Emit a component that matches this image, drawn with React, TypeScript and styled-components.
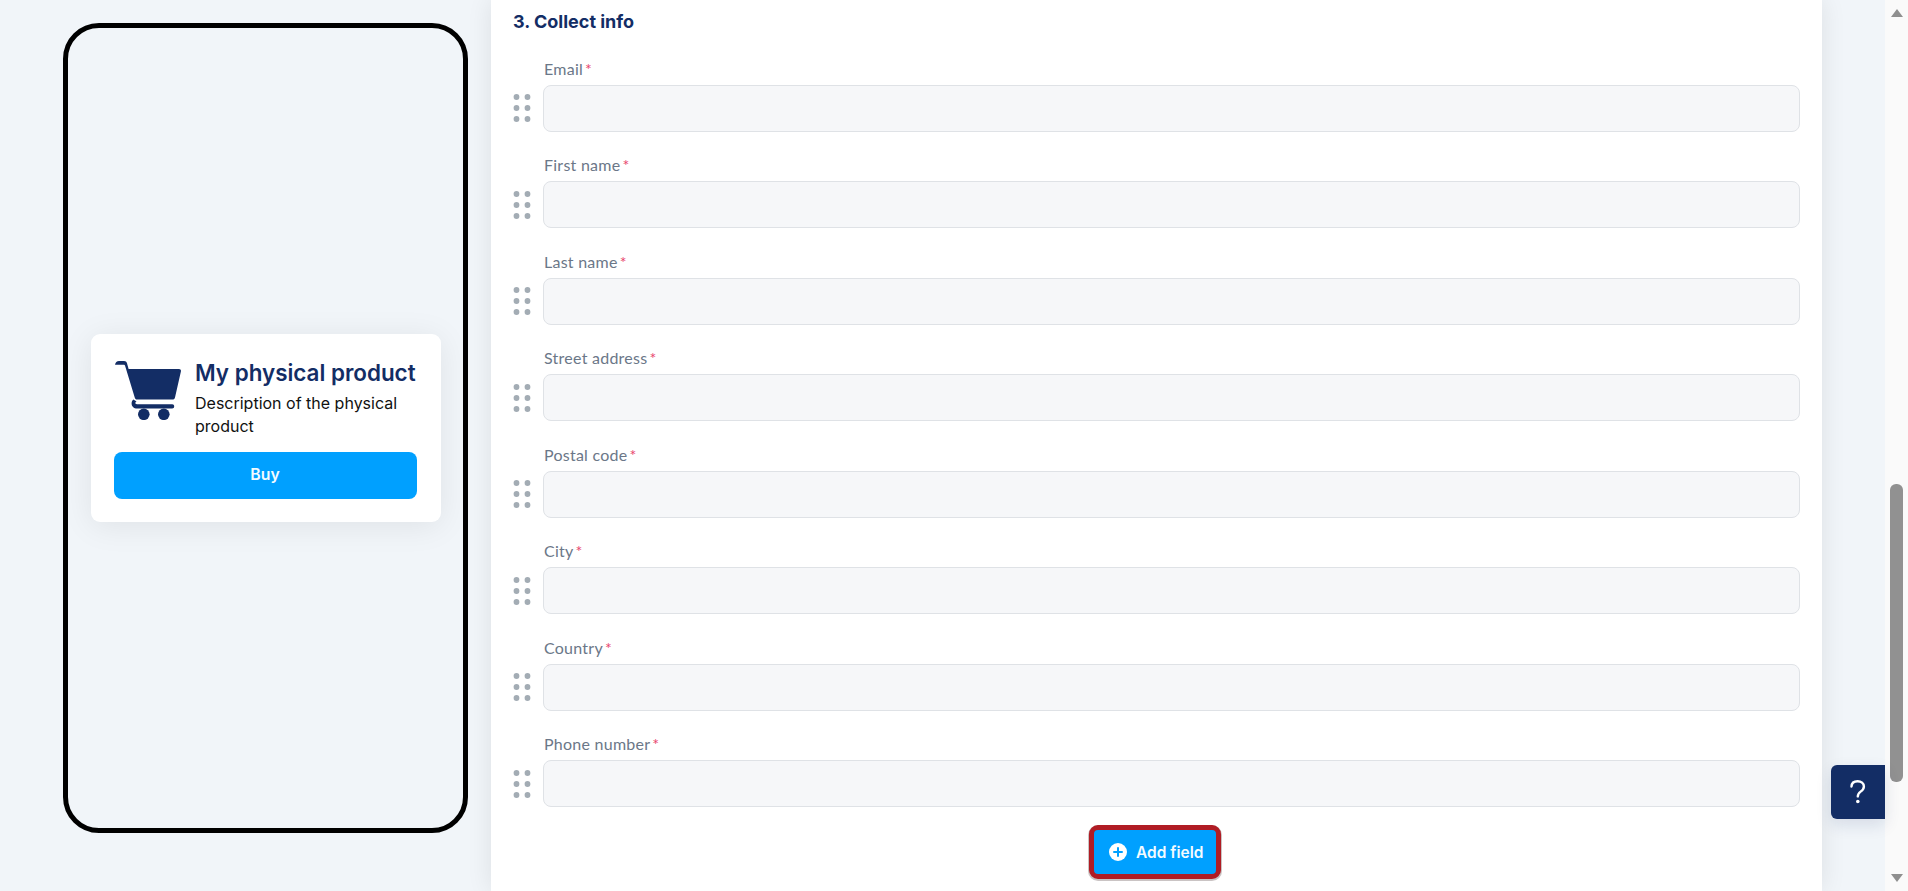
import styled, { createGlobalStyle } from "styled-components";

const GlobalStyle = createGlobalStyle`
  html, body {
    margin: 0;
    padding: 0;
    height: 100%;
    overflow: hidden;
    background: #f1f5f9;
    font-family: "Inter", "Liberation Sans", sans-serif;
  }
  * { box-sizing: border-box; }
`;

const Page = styled.div`
  position: relative;
  display: flex;
  width: 1908px;
  height: 891px;
  overflow: hidden;
  background: #f1f5f9;
`;

const PreviewColumn = styled.div`
  flex: 0 0 491px;
  padding: 23px 23px 0 63px;
`;

const Phone = styled.div`
  display: flex;
  align-items: center;
  justify-content: center;
  width: 405px;
  height: 810px;
  border: 5px solid #000;
  border-radius: 36px;
`;

const ProductCard = styled.div`
  width: 350px;
  height: 188px;
  padding: 24px 23px 0;
  background: #fff;
  border-radius: 9px;
  box-shadow: 0 4px 32px rgba(0, 0, 0, 0.08);
`;

const ProductRow = styled.div`
  display: flex;
  gap: 14.5px;
  height: 94px;
  align-items: flex-start;
`;

const CartIcon = styled.svg`
  flex: 0 0 66px;
  width: 66px;
  height: 59px;
  margin-top: 3px;
  margin-left: 1px;
  color: #132d65;
`;

const ProductText = styled.div`
  flex: 1;
  min-width: 0;
`;

const ProductTitle = styled.div`
  font-size: 22.4px;
  line-height: 30px;
  font-weight: 600;
  color: #132d65;
  white-space: nowrap;
`;

const ProductDescription = styled.div`
  margin-top: 4px;
  font-size: 16px;
  line-height: 23px;
  color: #111;
`;

const BuyButton = styled.button`
  display: block;
  width: 303px;
  height: 47px;
  padding: 0 0 2px;
  border: 0;
  border-radius: 8px;
  background: #00a0ff;
  color: #f4fbff;
  font-family: inherit;
  font-size: 15.8px;
  font-weight: 600;
`;

const Panel = styled.main`
  flex: 0 0 1331px;
  height: 891px;
  padding: 12px 22px 0;
  background: #fff;
  box-shadow: 0 0 24px rgba(0, 0, 0, 0.09);
`;

const SectionTitle = styled.h2`
  margin: 0 0 27.6px;
  font-size: 18px;
  line-height: 19px;
  font-weight: 700;
  color: #132d65;
`;

const FieldList = styled.div`
  display: flex;
  flex-direction: column;
  gap: 23.5px;
`;

const FieldBlock = styled.div`
  display: grid;
  grid-template-columns: 30px 1fr;
  grid-template-rows: 20px 47px;
  row-gap: 6px;
  align-items: center;
`;

const FieldLabel = styled.label`
  grid-column: 2;
  padding-left: 1px;
  font-family: "Lato", "Liberation Sans", sans-serif;
  font-size: 16px;
  letter-spacing: 0.25px;
  line-height: 20px;
  color: #6b7788;
`;

const Required = styled.span`
  margin-left: 2px;
  color: #e8446c;
`;

const DragHandle = styled.svg`
  grid-column: 1;
  grid-row: 2;
  width: 18px;
  height: 30px;
  color: #a3acb4;
`;

const FieldInput = styled.input`
  grid-column: 2;
  grid-row: 2;
  width: 100%;
  height: 47px;
  padding: 0 12px;
  background: #f6f7f9;
  border: 1px solid #dfe2e6;
  border-radius: 8px;
  outline: none;
`;

const AddRow = styled.div`
  display: flex;
  justify-content: center;
  margin-top: 22px;
  padding-right: 3px;
`;

const AddButton = styled.button`
  display: flex;
  align-items: center;
  gap: 9px;
  height: 46px;
  width: 124px;
  padding: 0 0 0 16px;
  border: 0;
  border-radius: 5px;
  background: #00a0ff;
  color: #f4fbff;
  font-family: inherit;
  font-size: 15.5px;
  font-weight: 600;
  outline: 5px solid #b01c24;
  outline-offset: -1px;
  box-shadow: 0 1px 0 5px rgba(80, 60, 60, 0.3);
  white-space: nowrap;
`;

const PlusIcon = styled.svg`
  flex: 0 0 18px;
  width: 18px;
  height: 18px;
`;

const Gutter = styled.div`
  flex: 1;
`;

const ScrollTrack = styled.div`
  position: relative;
  flex: 0 0 23px;
  height: 891px;
  background: #fafafa;
`;

const ScrollArrow = styled.div<{ $down?: boolean }>`
  position: absolute;
  left: 6px;
  ${({ $down }) => ($down ? "bottom: 9px;" : "top: 9px;")}
  width: 0;
  height: 0;
  border-left: 6px solid transparent;
  border-right: 6px solid transparent;
  ${({ $down }) =>
    $down ? "border-top: 8px solid #8f8f8f;" : "border-bottom: 8px solid #8f8f8f;"}
`;

const ScrollThumb = styled.div`
  position: absolute;
  left: 5px;
  top: 484px;
  width: 13px;
  height: 298px;
  border-radius: 6px;
  background: #919191;
`;

const HelpButton = styled.button`
  position: absolute;
  left: 1831px;
  top: 765px;
  display: flex;
  align-items: center;
  justify-content: center;
  width: 54px;
  height: 54px;
  padding: 0;
  border: 0;
  border-radius: 6px 0 0 6px;
  background: #132d65;
  box-shadow: 0 6px 16px rgba(19, 45, 101, 0.12);
`;

const HelpGlyph = styled.svg`
  width: 16px;
  height: 24px;
  color: #fff;
`;

const FIELDS = [
  "Email",
  "First name",
  "Last name",
  "Street address",
  "Postal code",
  "City",
  "Country",
  "Phone number",
];

const Cart = () => (
  <CartIcon viewBox="0 0 66 59" aria-hidden="true">
    <path
      fill="currentColor"
      d="M0 3.8C0.4 1.4 1.8 0 4 0H9C10.6 0 11.6 0.8 12 2.2L13.6 8H64C65.4 8 66.2 9 65.9 10.4L60 36.5C59.6 38 58.8 38.6 57.6 38.6H22C20.8 38.6 20.2 38 19.8 36.8L10 4.6C9.8 4 9.4 3.8 8.6 3.8H0Z"
    />
    <path
      fill="currentColor"
      d="M18.4 38.6L21.6 40.6C20.6 41 20.4 41.6 20.4 42C20.4 42.8 21 43.2 22 43.2H57.2C58.4 43.2 59.2 44 59.2 45.3C59.2 46.7 58.4 47.5 57.2 47.5H22.4C18.6 47.5 16.6 45.2 16.6 42.4C16.6 40.8 17.2 39.6 18.4 38.6Z"
    />
    <circle cx="28.8" cy="53.3" r="5.8" fill="currentColor" />
    <circle cx="48.8" cy="53.3" r="5.8" fill="currentColor" />
  </CartIcon>
);

const Drag = () => (
  <DragHandle viewBox="0 0 18 30" aria-hidden="true">
    {[4, 15, 26].map((y) =>
      [3.5, 14.5].map((x) => (
        <circle key={`${x}-${y}`} cx={x} cy={y} r="2.9" fill="currentColor" />
      ))
    )}
  </DragHandle>
);

export default function App() {
  return (
    <>
      <GlobalStyle />
      <Page>
        <PreviewColumn>
          <Phone>
            <ProductCard>
              <ProductRow>
                <Cart />
                <ProductText>
                  <ProductTitle>My physical product</ProductTitle>
                  <ProductDescription>Description of the physical product</ProductDescription>
                </ProductText>
              </ProductRow>
              <BuyButton>Buy</BuyButton>
            </ProductCard>
          </Phone>
        </PreviewColumn>
        <Panel>
          <SectionTitle>3. Collect info</SectionTitle>
          <FieldList>
            {FIELDS.map((name) => (
              <FieldBlock key={name}>
                <FieldLabel>
                  {name}
                  <Required>*</Required>
                </FieldLabel>
                <Drag />
                <FieldInput readOnly />
              </FieldBlock>
            ))}
          </FieldList>
          <AddRow>
            <AddButton>
              <PlusIcon viewBox="0 0 18 18" aria-hidden="true">
                <circle cx="9" cy="9" r="9" fill="#fff" />
                <path d="M9 5v8M5 9h8" stroke="#00a0ff" strokeWidth="2" strokeLinecap="round" />
              </PlusIcon>
              Add field
            </AddButton>
          </AddRow>
        </Panel>
        <Gutter />
        <ScrollTrack>
          <ScrollArrow />
          <ScrollThumb />
          <ScrollArrow $down />
        </ScrollTrack>
        <HelpButton aria-label="Help">
          <HelpGlyph viewBox="0 0 16 24" aria-hidden="true">
            <path
              d="M1.5 6.5C1.7 3.2 4.2 1.2 7.6 1.2C11.2 1.2 13.9 3.3 13.9 6.4C13.9 9 12.5 10.2 10.6 11.6C8.8 12.9 7.8 14 7.8 16.4"
              fill="none"
              stroke="currentColor"
              strokeWidth="2.4"
              strokeLinecap="round"
            />
            <circle cx="7.8" cy="21.5" r="1.8" fill="currentColor" />
          </HelpGlyph>
        </HelpButton>
      </Page>
    </>
  );
}
